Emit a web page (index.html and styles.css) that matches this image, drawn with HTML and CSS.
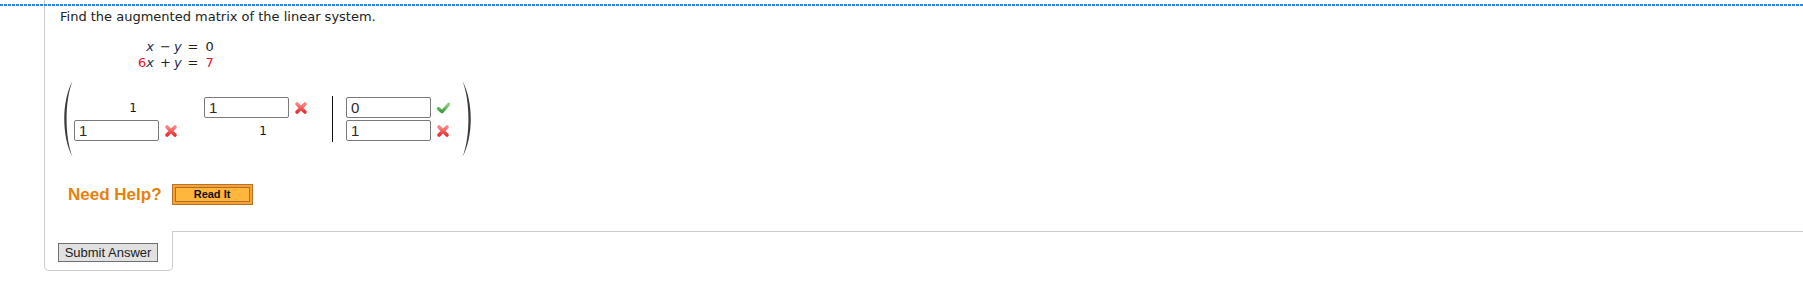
FILE: index.html
```html
<!DOCTYPE html>
<html lang="en">
<head>
  <meta charset="UTF-8" />
  <title>Augmented Matrix</title>
  <link rel="stylesheet" href="styles.css">
</head>
<body>

<div class="frame">
  <div class="question">
    <div class="dotted"></div>

    <div class="content">
      <p class="prompt">Find the augmented matrix of the linear system.</p>

      <div class="system">
        <span class="lhs"><i class="var">x</i></span><span>&minus;</span><span><i class="var">y</i></span><span class="eq">=</span><span>0</span>
        <span class="lhs"><span class="red">6</span><i class="var">x</i></span><span>+</span><span><i class="var">y</i></span><span class="eq">=</span><span class="red">7</span>
      </div>

      <div class="matrix">
        <svg class="paren" width="10" height="76" viewBox="0 0 10 76">
          <path d="M9.5 0 C-1.5 20 -1.5 56 9.5 76 C1.6 56 1.6 20 9.5 0 Z" fill="#3c3c3c"/>
        </svg>

        <div class="cells">
          <div class="cell text c1 r1">1</div>
          <div class="cell c2 r1">
            <input class="answer" type="text" value="1">
            <svg class="mark" width="14" height="14" viewBox="0 0 14 14"><use href="#cross"/></svg>
          </div>
          <div class="bar"></div>
          <div class="cell c3 r1">
            <input class="answer" type="text" value="0">
            <svg class="mark" width="16" height="14" viewBox="0 0 16 14"><use href="#check"/></svg>
          </div>

          <div class="cell c1 r2">
            <input class="answer" type="text" value="1">
            <svg class="mark" width="14" height="14" viewBox="0 0 14 14"><use href="#cross"/></svg>
          </div>
          <div class="cell text c2 r2">1</div>
          <div class="cell c3 r2">
            <input class="answer" type="text" value="1">
            <svg class="mark" width="14" height="14" viewBox="0 0 14 14"><use href="#cross"/></svg>
          </div>
        </div>

        <svg class="paren" width="10" height="76" viewBox="0 0 10 76">
          <path d="M0.5 0 C11.5 20 11.5 56 0.5 76 C8.4 56 8.4 20 0.5 0 Z" fill="#3c3c3c"/>
        </svg>
      </div>

      <div class="help">
        <span class="help-label">Need Help?</span>
        <button class="read-it"><span>Read It</span></button>
      </div>
    </div>
  </div>

  <div class="bottom">
    <div class="tab">
      <button class="submit">Submit Answer</button>
    </div>
    <div class="rest"></div>
  </div>
</div>

<svg width="0" height="0" class="defs">
  <defs>
    <linearGradient id="redGrad" x1="0" y1="0" x2="0" y2="1">
      <stop offset="0" stop-color="#ff8585"/>
      <stop offset="1" stop-color="#e63232"/>
    </linearGradient>
    <linearGradient id="greenGrad" x1="0" y1="0" x2="0" y2="1">
      <stop offset="0" stop-color="#8fd17f"/>
      <stop offset="1" stop-color="#3b9a36"/>
    </linearGradient>
    <g id="cross">
      <path d="M3 3 L11 11 M11 3 L3 11" stroke="url(#redGrad)" stroke-width="3.6" stroke-linecap="round" fill="none"/>
    </g>
    <g id="check">
      <path d="M2.5 7.5 L6.5 11 L13.5 3" stroke="url(#greenGrad)" stroke-width="3.4" stroke-linecap="round" stroke-linejoin="round" fill="none"/>
    </g>
  </defs>
</svg>

</body>
</html>
```

FILE: styles.css
```css
body {
  margin: 0;
  background: #fff;
  font-family: "DejaVu Sans", Verdana, sans-serif;
  font-size: 13px;
  color: #222;
}
.frame {
  margin-left: 44px;
}
.question {
  height: 231px;
  border-left: 1px solid #cbcbcb;
  box-sizing: border-box;
}
.dotted {
  margin-left: -45px;
  padding-top: 4px;
}
.dotted::after {
  content: "";
  display: block;
  height: 2px;
  background: repeating-linear-gradient(90deg, #2a88e2 0 3px, transparent 3px 4px);
}
.content {
  padding-left: 15px;
}
.prompt {
  margin: 3px 0 0;
  line-height: 16px;
}

/* linear system */
.system {
  display: grid;
  grid-template-columns: auto auto auto auto auto;
  column-gap: 3px;
  justify-content: start;
  margin: 14px 0 0 78px;
  line-height: 16px;
  width: max-content;
}
.system .lhs {
  text-align: right;
  padding-right: 3px;
}
.system .eq {
  padding: 0 4px 0 3px;
}
.var {
  color: #1f3150;
}
.red {
  color: #e8141c;
}

/* matrix */
.matrix {
  display: flex;
  align-items: center;
  margin: 10px 0 0 3px;
  height: 76px;
}
.cells {
  display: grid;
  grid-template-columns: 130px 128px 14px 105px;
  grid-template-rows: 21px 21px;
  row-gap: 2px;
  margin: 0 11px 0 1px;
  font-family: "Liberation Sans", Arial, sans-serif;
}
.cell {
  display: flex;
  align-items: center;
}
.cell.text {
  width: 104px;
  justify-content: center;
  padding-left: 14px;
  box-sizing: border-box;
  font-family: "DejaVu Sans", Verdana, sans-serif;
  font-size: 12px;
  color: #111;
}
.c1 { grid-column: 1; }
.c2 { grid-column: 2; }
.c3 { grid-column: 4; }
.r1 { grid-row: 1; }
.r2 { grid-row: 2; }
.bar {
  grid-column: 3;
  grid-row: 1 / span 2;
  border-left: 1px solid #111;
  margin: -1px 0 -1px;
}
.answer {
  width: 85px;
  height: 21px;
  box-sizing: border-box;
  margin: 0;
  padding: 0 4px;
  border: 1px solid #7a7a7a;
  border-radius: 2px;
  font-family: "Liberation Sans", Arial, sans-serif;
  font-size: 15px;
  color: #2a2a2a;
  background: #fff;
}
.mark {
  margin-left: 5px;
}
.defs {
  position: absolute;
}

/* help */
.help {
  display: flex;
  align-items: center;
  margin: 27px 0 0 8px;
  height: 21px;
}
.help-label {
  font-family: "Liberation Sans", Arial, sans-serif;
  font-weight: bold;
  font-size: 17px;
  color: #e8800c;
}
.read-it {
  margin-left: 10px;
  width: 81px;
  height: 21px;
  padding: 2px;
  box-sizing: border-box;
  border: 1px solid #b8732a;
  background: #f7a233;
  cursor: pointer;
}
.read-it span {
  display: block;
  height: 100%;
  border: 1px solid #b06c28;
  background: #ffb63c;
  box-sizing: border-box;
  font-family: "Liberation Sans", Arial, sans-serif;
  font-weight: bold;
  font-size: 11px;
  line-height: 13px;
  color: #111;
}

/* submit tab */
.bottom {
  display: flex;
}
.tab {
  width: 129px;
  box-sizing: border-box;
  padding: 12px 0 8px 13px;
  border: 1px solid #cbcbcb;
  border-top: none;
  border-radius: 0 0 5px 5px;
}
.rest {
  flex: 1;
  border-top: 1px solid #cbcbcb;
}
.submit {
  display: block;
  width: 100px;
  height: 19px;
  margin: 0;
  padding: 0;
  border: 1px solid #707070;
  background: #e1e1e1;
  font-family: "Liberation Sans", Arial, sans-serif;
  font-size: 13px;
  color: #222;
}
```
